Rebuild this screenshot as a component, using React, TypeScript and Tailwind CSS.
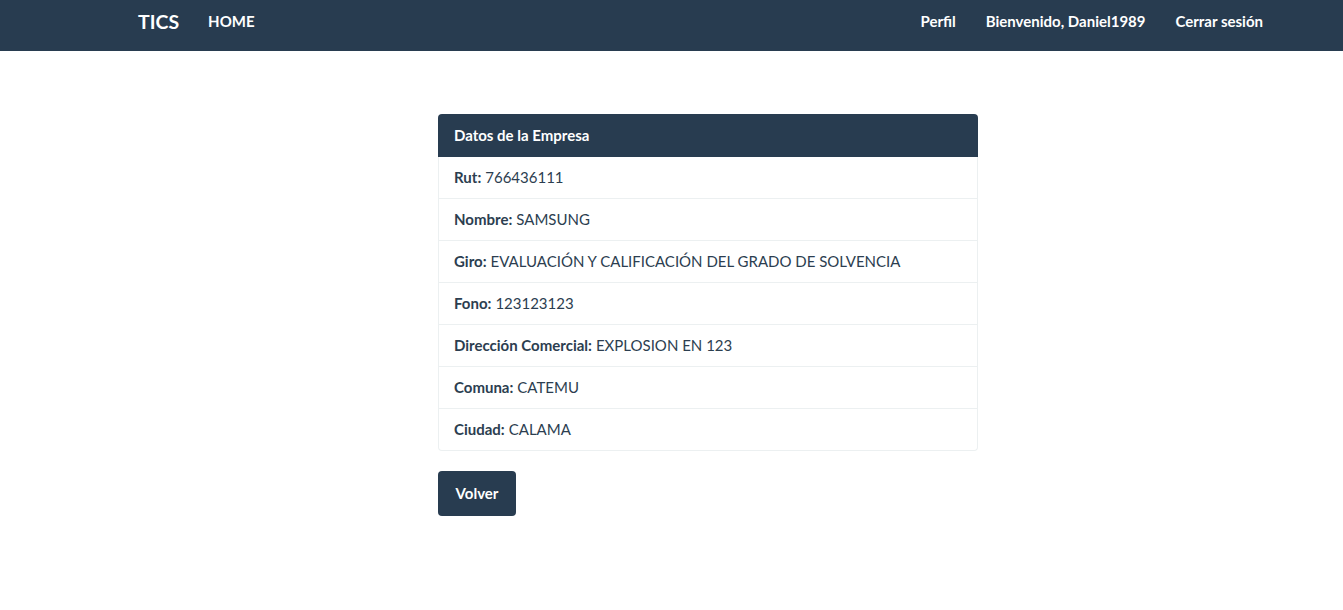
const rows: [string, string][] = [
  ["Rut:", "766436111"],
  ["Nombre:", "SAMSUNG"],
  ["Giro:", "EVALUACIÓN Y CALIFICACIÓN DEL GRADO DE SOLVENCIA"],
  ["Fono:", "123123123"],
  ["Dirección Comercial:", "EXPLOSION EN 123"],
  ["Comuna:", "CATEMU"],
  ["Ciudad:", "CALAMA"],
];

export default function App() {
  return (
    <div className="min-h-[610px] bg-white text-[15px] text-[#2c3e50] font-['Lato','Liberation_Sans',sans-serif]">
      {/* navbar */}
      <nav className="h-[51px] bg-[#283c50] text-white font-bold flex items-start">
        <div className="flex items-center h-[43px] pl-[138px]">
          <span className="text-[19.5px] leading-none">TICS</span>
          <span className="ml-[29px] text-[15px] leading-none">HOME</span>
        </div>
        <div className="ml-auto flex items-center h-[43px] gap-[30px] pr-[80px] text-[15px] leading-none">
          <span>Perfil</span>
          <span>Bienvenido, Daniel1989</span>
          <span>Cerrar sesión</span>
        </div>
      </nav>

      <main className="pt-[63px] pl-[438px]">
        <div className="w-[540px]">
          <div className="bg-[#283c50] text-white font-bold h-[43px] px-[16px] flex items-center rounded-t-[4px]">
            Datos de la Empresa
          </div>
          <div className="border-x border-b border-[#ecf0f1] rounded-b-[4px]">
            {rows.map(([label, value], i) => (
              <div
                key={label}
                className={`px-[15px] flex items-center pb-[1px] ${i > 0 ? "h-[42px] border-t border-[#ecf0f1]" : "h-[41px]"}`}
              >
                <b className="font-bold">{label}</b>
                <span className="ml-[4px]">{value}</span>
              </div>
            ))}
          </div>
        </div>

        <button className="mt-[20px] w-[78px] h-[45px] rounded-[4px] bg-[#283c50] text-white font-bold">
          Volver
        </button>
      </main>
    </div>
  );
}
